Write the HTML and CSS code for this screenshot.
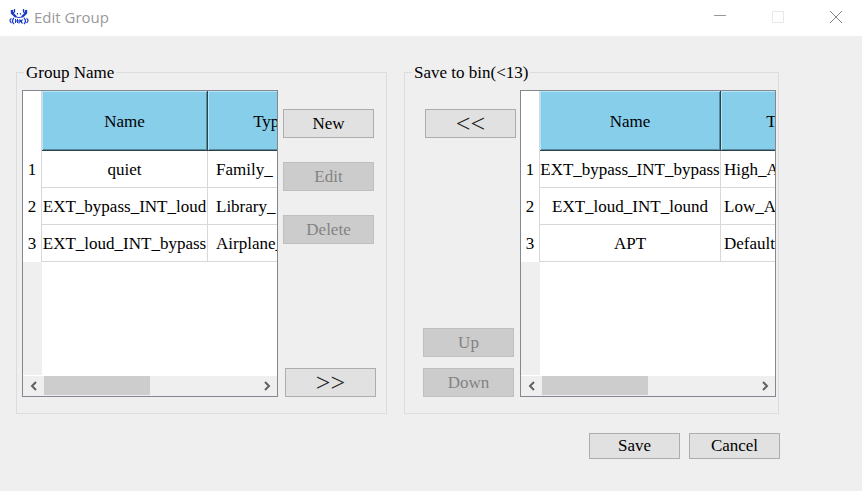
FILE: index.html
```html
<!DOCTYPE html>
<html lang="en">
<head>
<meta charset="utf-8">
<title>Edit Group</title>
<link rel="stylesheet" href="styles.css">
</head>
<body>
<header class="titlebar">
  <svg class="logo" viewBox="0 0 20 16" aria-hidden="true">
    <g fill="none" stroke="#1c3cc8">
      <path d="M3 1v3l4 4M17 1v3l-4 4" stroke-width="2.400"/>
      <path d="M5.500 0v3L4 4M14.500 0v3L16 4" stroke-width="1.300"/>
      <path d="M6 7c1 2 7 2 8 0M8.500 4v1.500M11.500 4v1.500" stroke-width="1.200"/>
      <path d="M2.500 9.500c-2 1-2 3 0 4.500M5 9c-2 2-2 4 0 6M17.500 9.500c2 1 2 3 0 4.500M15 9c2 2 2 4 0 6" stroke-width="1.200"/>
      <path d="M6.500 10v4M8.500 10v4M6.500 12h2M10 14.500V11h1.500v2H10M14 11h-1.500v3H14" stroke-width="1"/>
    </g>
  </svg>
  <h1 class="title">Edit Group</h1>
  <div class="window-controls">
    <button type="button" class="control" aria-label="Minimize"><svg viewBox="0 0 12 12"><path d="M0 4.500h12" stroke="#999"/></svg></button>
    <button type="button" class="control" aria-label="Maximize" disabled><svg viewBox="0 0 12 12"><path d="M.5.5h11v11H.5z" stroke="#e8e8e8"/></svg></button>
    <button type="button" class="control" aria-label="Close"><svg viewBox="0 0 12 12"><path d="M0 0l12 12M12 0L0 12" stroke="#888"/></svg></button>
  </div>
</header>
<main class="dialog">
  <div class="groups">
    <fieldset class="group group-source">
      <legend>Group Name</legend>
      <div class="panel">
        <div class="grid">
          <div class="viewport">
            <table>
              <colgroup><col class="col-index"><col class="col-name"><col class="col-type"></colgroup>
              <thead><tr><td></td><th scope="col">Name</th><th scope="col">Type</th></tr></thead>
              <tbody>
                <tr><th scope="row">1</th><td>quiet</td><td class="type">Family_</td></tr>
                <tr><th scope="row">2</th><td>EXT_bypass_INT_loud</td><td class="type">Library_</td></tr>
                <tr><th scope="row">3</th><td>EXT_loud_INT_bypass</td><td class="type">Airplane_</td></tr>
              </tbody>
            </table>
          </div>
          <div class="scrollbar">
            <button type="button" class="arrow" aria-label="Scroll left"><svg viewBox="0 0 8 10"><path d="M6 1L2 5l4 4"/></svg></button>
            <div class="track"><div class="thumb"></div></div>
            <button type="button" class="arrow" aria-label="Scroll right"><svg viewBox="0 0 8 10"><path d="M2 1l4 4-4 4"/></svg></button>
          </div>
        </div>
        <div class="actions">
          <button type="button" class="btn">New</button>
          <button type="button" class="btn" disabled>Edit</button>
          <button type="button" class="btn" disabled>Delete</button>
          <button type="button" class="btn btn-move">&gt;&gt;</button>
        </div>
      </div>
    </fieldset>
    <fieldset class="group group-target">
      <legend>Save to bin(&lt;13)</legend>
      <div class="panel">
        <div class="actions">
          <button type="button" class="btn btn-move">&lt;&lt;</button>
          <button type="button" class="btn btn-up" disabled>Up</button>
          <button type="button" class="btn" disabled>Down</button>
        </div>
        <div class="grid">
          <div class="viewport">
            <table>
              <colgroup><col class="col-index"><col class="col-name"><col class="col-type"></colgroup>
              <thead><tr><td></td><th scope="col">Name</th><th scope="col">Type</th></tr></thead>
              <tbody>
                <tr><th scope="row">1</th><td>EXT_bypass_INT_bypass</td><td class="type">High_A</td></tr>
                <tr><th scope="row">2</th><td>EXT_loud_INT_lound</td><td class="type">Low_AN</td></tr>
                <tr><th scope="row">3</th><td>APT</td><td class="type">Default</td></tr>
              </tbody>
            </table>
          </div>
          <div class="scrollbar">
            <button type="button" class="arrow" aria-label="Scroll left"><svg viewBox="0 0 8 10"><path d="M6 1L2 5l4 4"/></svg></button>
            <div class="track"><div class="thumb"></div></div>
            <button type="button" class="arrow" aria-label="Scroll right"><svg viewBox="0 0 8 10"><path d="M2 1l4 4-4 4"/></svg></button>
          </div>
        </div>
      </div>
    </fieldset>
  </div>
  <footer class="footer">
    <button type="button" class="btn">Save</button>
    <button type="button" class="btn">Cancel</button>
  </footer>
</main>
</body>
</html>
```
FILE: styles.css
```css
* { box-sizing: border-box; }
body {
  margin: 0;
  min-height: 100vh;
  background: #efefef;
  color: #000;
  font: 17px/20px "Liberation Serif", "Times New Roman", serif;
}
button { font: inherit; color: inherit; padding: 0; border: 0; background: none; }
.titlebar { display: flex; align-items: center; height: 36px; padding: 0 2px 2px 9px; background: #fff; }
.logo { width: 20px; height: 16px; }
.title { margin: 0 0 0 5px; font: 400 15px/24px "Open Sans", "Noto Sans", sans-serif; color: #999; }
.window-controls { display: flex; margin-left: auto; height: 100%; }
.control { display: grid; place-items: center; width: 48px; margin-left: 10px; }
.control svg { width: 12px; height: 12px; fill: none; }
.dialog { padding: 25px 82px 16px 16px; }
.groups { display: grid; grid-template-columns: 371fr 375fr; gap: 17px; padding-right: 1px; }
.group { min-width: 0; margin: 0; border: 1px solid #dcdcdc; }
.group-source { padding: 7px 10px 16px 5px; }
.group-target { padding: 7px 2px 16px 18px; }
legend { padding: 2px 2px 0; margin-left: 2px; }
.group-target legend { margin-left: -11px; }
.panel { display: flex; gap: 5px; height: 307px; }
.group-target .panel { gap: 4px; }
.grid { display: flex; flex-direction: column; flex: 1; min-width: 0; border: 1px solid #828790; background: #fff; }
.viewport { flex: 1; overflow: hidden; background: linear-gradient(to right, #efefef 19px, #fff 19px); }
table { table-layout: fixed; width: 310px; border-collapse: separate; border-spacing: 0; }
.group-target table { width: 325px; }
.col-index { width: 19px; }
.col-name { width: 166px; }
.group-target .col-name { width: 181px; }
th, td { padding: 0; height: 37px; font-weight: 400; text-align: center; white-space: nowrap; background: #fff; border: solid #d8d8d8; border-width: 0 1px 1px 0; }
thead th, tbody td { padding-top: 2px; }
thead td { height: 60px; border-bottom: 0; }
thead th {
  height: 60px;
  background: #87ceeb;
  border-color: #2b424b;
  box-shadow: inset 1px 1px #b5e5f8, inset -1px -1px #5a8a9d;
}
tbody th { border-bottom: 0; }
.type { padding-left: 8px; text-align: left; }
.group-target .type { padding-left: 3px; }
.scrollbar { display: flex; height: 21px; border: solid #fff; border-width: 1px 0 0; background: #efefef; }
.arrow { display: grid; place-items: center; width: 21px; }
.arrow svg { width: 8px; height: 10px; fill: none; stroke: #606060; stroke-width: 2; }
.track { flex: 1; }
.thumb { width: 50%; height: 19px; background: #cdcdcd; }
.actions { display: flex; flex-direction: column; width: 93px; padding-top: 19px; }
.btn { width: 91px; height: 29px; border: 1px solid #adadad; background: #e1e1e1; }
.btn:disabled { border-color: #bfbfbf; background: #ccc; color: #838383; }
.btn-move { font-size: 26px; color: #222; }
.group-source .actions { gap: 24px; }
.group-source .btn-move { margin-top: auto; align-self: flex-end; }
.group-target .btn-move { align-self: flex-end; }
.group-target .actions { gap: 11px; }
.btn-up { margin-top: auto; }
.footer { display: flex; justify-content: flex-end; gap: 9px; margin-top: 19px; }
.footer .btn { height: 26px; }
```
